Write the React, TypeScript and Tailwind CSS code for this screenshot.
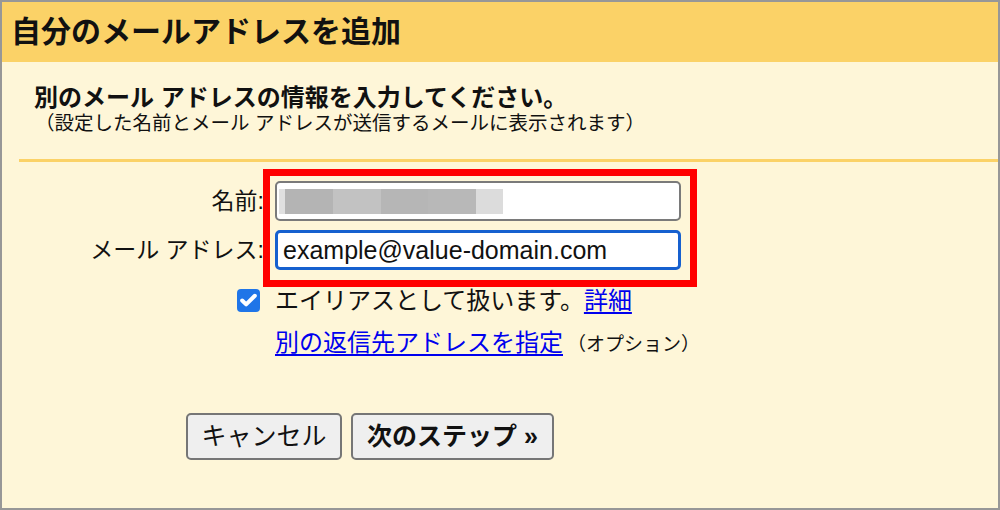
import { Check } from 'lucide-react';

const font = { fontFamily: '"Liberation Sans", "Noto Sans CJK JP", sans-serif' };

// pixelated (blurred) name placeholder blocks
const nameBlocks = [
  { w: 6, c: 'bg-[#e0e0e0]' },
  { w: 48, c: 'bg-[#b4b4b4]' },
  { w: 48, c: 'bg-[#c2c2c2]' },
  { w: 47, c: 'bg-[#b6b6b6]' },
  { w: 48, c: 'bg-[#b8b8b8]' },
  { w: 27, c: 'bg-[#dcdcdc]' },
];

export default function App() {
  return (
    <div
      className="relative w-[1000px] h-[510px] border-2 border-[#979797] bg-[#fef6d8] text-[#111] flex flex-col overflow-hidden"
      style={font}
    >
      {/* header */}
      <div className="h-[60px] bg-[#fbd267] px-[9px] flex items-center shrink-0">
        <h1 className="text-[30px] font-bold leading-none">自分のメールアドレスを追加</h1>
      </div>

      {/* intro */}
      <div className="pl-[32px] pt-[21px]">
        <p className="text-[24px] font-bold leading-[29px]">別のメール アドレスの情報を入力してください。</p>
        <p className="text-[19.5px] leading-[24px] mt-[-1px] pl-[1px]">（設定した名前とメール アドレスが送信するメールに表示されます）</p>
      </div>
      <div className="ml-[17px] mt-[24px] h-[3px] bg-[#fbd267] shrink-0" />

      {/* form */}
      <div className="mt-[19px] grid grid-cols-[268px_406px] gap-x-[5px] gap-y-[9px] items-center">
        <label className="text-right text-[23px] leading-none pr-[6px]">名前:</label>
        <div className="h-[40px] bg-white border-2 border-[#7a7a7a] rounded-[5px] flex items-center pl-[2px]">
          <div className="flex h-[25px]">
            {nameBlocks.map((b, i) => (
              <div key={i} className={b.c} style={{ width: b.w }} />
            ))}
          </div>
        </div>

        <label className="text-right text-[23px] leading-none pr-[6px]">メール アドレス:</label>
        <div className="h-[40px] bg-white border-[3px] border-[#1660cf] rounded-[5px] flex items-center pl-[5px]">
          <span className="text-[25px] leading-none">example@value-domain.com</span>
        </div>
      </div>

      {/* alias option */}
      <div className="mt-[17px] ml-[235px] flex items-center gap-[15px]">
        <span className="w-[23px] h-[23px] rounded-[4px] bg-[#1f75e8] flex items-center justify-center">
          <Check className="w-[19px] h-[19px] text-white" strokeWidth={5} />
        </span>
        <span className="text-[24px] leading-none mt-[2px]">
          エイリアスとして扱います。
          <a href="#" className="text-[#0000ee] underline underline-offset-[3px]">詳細</a>
        </span>
      </div>

      <div className="mt-[18px] ml-[273px] flex items-baseline gap-[4px]">
        <a href="#" className="text-[24px] leading-none text-[#0000ee] underline underline-offset-[3px]">別の返信先アドレスを指定</a>
        <span className="text-[19px] leading-none">（オプション）</span>
      </div>

      {/* buttons */}
      <div className="mt-[58px] ml-[184px] flex gap-[9px]">
        <button className="h-[47px] w-[156px] bg-[#efefef] border-2 border-[#767676] rounded-[5px] text-[25px] leading-none">
          キャンセル
        </button>
        <button className="h-[47px] w-[203px] bg-[#efefef] border-2 border-[#767676] rounded-[5px] text-[25px] leading-none font-bold">
          次のステップ »
        </button>
      </div>

      {/* red highlight annotation */}
      <div className="absolute left-[261px] top-[167px] w-[434px] h-[118px] border-[7px] border-[#ff0000] pointer-events-none" />
    </div>
  );
}
